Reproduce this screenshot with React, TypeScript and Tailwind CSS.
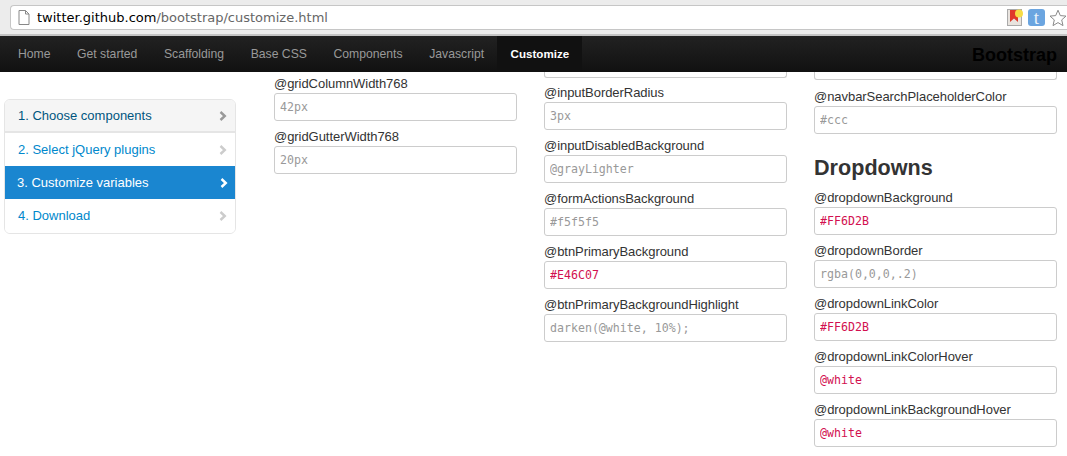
const navLinks = ["Home", "Get started", "Scaffolding", "Base CSS", "Components", "Javascript"];

const steps = [
  { label: "1. Choose components", cls: "h-[33px] bg-[#f5f5f5] text-[#005580] border-b-2 border-[#e5e5e5]", icon: "text-[#999]" },
  { label: "2. Select jQuery plugins", cls: "h-[33px] bg-white text-[#0088cc]", icon: "text-[#ccc]" },
  { label: "3. Customize variables", cls: "h-[33px] bg-[#1a86d0] text-white -mx-px", icon: "text-white" },
  { label: "4. Download", cls: "h-[34px] bg-white text-[#0088cc]", icon: "text-[#ccc]" },
];

type FieldProps = { name: string; value: string; custom?: boolean };

function Field({ name, value, custom }: FieldProps) {
  return (
    <div className="mb-[6px]">
      <label className="block pt-px text-[13px] leading-[18px] tracking-[-0.05px] text-[#333]">{name}</label>
      <input
        readOnly
        value={value}
        className={`block h-[28px] w-full rounded-[3px] border border-[#ccc] bg-white px-[5px] font-['DejaVu_Sans_Mono',monospace] text-[11.6px] outline-none ${
          custom ? "text-[#d2104f]" : "text-[#999]"
        }`}
      />
    </div>
  );
}

function Cut({ height }: { height: string }) {
  return <div className={`rounded-b-[3px] border border-t-0 border-[#ccc] ${height}`} />;
}

function Chevron({ className }: { className: string }) {
  return (
    <svg width="8" height="10" viewBox="0 0 8 10" className={className}>
      <path d="M1.5 1 L5.8 5 L1.5 9" fill="none" stroke="currentColor" strokeWidth="2.4" />
    </svg>
  );
}

function PageIcon() {
  return (
    <svg width="12" height="15" viewBox="0 0 12 15" className="ml-[7px] shrink-0">
      <path d="M1 .5 H7.5 L11 4 V14.5 H1 Z" fill="#fff" stroke="#888" />
      <path d="M7.5 .5 V4 H11" fill="none" stroke="#888" />
    </svg>
  );
}

function BookmarkIcon() {
  return (
    <svg width="17" height="17" viewBox="0 0 17 17">
      <rect x="0.5" y="0.5" width="14" height="16" fill="#e9e4df" stroke="#aaa" />
      <path d="M3 1 H11 V13 L7 9.5 L3 13 Z" fill="#e0392b" />
      <circle cx="12" cy="4.5" r="4" fill="#f7dc45" />
    </svg>
  );
}

function TIcon() {
  return (
    <div className="flex h-[17px] w-[17px] items-center justify-center rounded-[3px] bg-[#6ba5e0] font-['Liberation_Serif',serif] text-[19px] leading-none text-[#eaf3fb]">
      t
    </div>
  );
}

function StarIcon() {
  return (
    <svg width="18" height="18" viewBox="0 0 18 18" className="shrink-0">
      <path
        d="M9 1.2 L11.3 6.6 L17 7.1 L12.7 10.9 L14 16.6 L9 13.6 L4 16.6 L5.3 10.9 L1 7.1 L6.7 6.6 Z"
        fill="#fff"
        stroke="#8a8a8a"
      />
    </svg>
  );
}

export default function App() {
  return (
    <div className="h-[456px] w-[1067px] overflow-hidden bg-white font-['Liberation_Sans',sans-serif]">
      {/* BROWSER TOOLBAR */}
      <div className="h-[36px] border-b-2 border-[#c4c4c4] bg-[#ececec] pt-[5px]">
        <div className="ml-[10px] flex h-[25px] items-center rounded-l-[4px] border border-r-0 border-[#c6c6c6] bg-white">
          <PageIcon />
          <div className="ml-[7px] flex-1 font-['DejaVu_Sans',sans-serif] text-[13px] text-[#666]">
            <span className="text-black">twitter.github.com</span>/bootstrap/customize.html
          </div>
          <div className="flex items-center gap-[4px]">
            <BookmarkIcon />
            <TIcon />
            <StarIcon />
          </div>
        </div>
      </div>

      {/* NAVBAR */}
      <nav className="flex h-[36px] items-stretch justify-between bg-gradient-to-b from-[#222222] to-[#111111] pl-[4.7px] pr-[10px] text-[12.2px]">
        <div className="flex items-stretch">
          {navLinks.map((link) => (
            <a key={link} className="flex items-center px-[13.3px] text-[#999]">
              {link}
            </a>
          ))}
          <a className="flex w-[85px] items-center justify-center bg-[#111] text-[11.6px] font-bold text-white">Customize</a>
        </div>
        <div className="mt-[2px] flex items-center text-[18px] font-bold text-[#000]">Bootstrap</div>
      </nav>

      {/* CONTENT */}
      <div className="flex items-start pl-[4px]">
        {/* SIDEBAR */}
        <div className="mt-[27px] w-[232px] shrink-0 overflow-hidden rounded-[6px] border border-[#e5e5e5] text-[13px]">
          {steps.map((step) => (
            <div key={step.label} className={`flex items-center justify-between pl-[13px] pr-[8px] ${step.cls}`}>
              <span>{step.label}</span>
              <Chevron className={step.icon} />
            </div>
          ))}
        </div>

        {/* COLUMN 1 */}
        <div className="ml-[38px] w-[243px] pt-[2px]">
          <Field name="@gridColumnWidth768" value="42px" />
          <Field name="@gridGutterWidth768" value="20px" />
        </div>

        {/* COLUMN 2 */}
        <div className="ml-[27px] w-[243px]">
          <Cut height="h-[6px]" />
          <div className="pt-[5px]">
            <Field name="@inputBorderRadius" value="3px" />
            <Field name="@inputDisabledBackground" value="@grayLighter" />
            <Field name="@formActionsBackground" value="#f5f5f5" />
            <Field name="@btnPrimaryBackground" value="#E46C07" custom />
            <Field name="@btnPrimaryBackgroundHighlight" value="darken(@white, 10%);" />
          </div>
        </div>

        {/* COLUMN 3 */}
        <div className="ml-[27px] w-[243px]">
          <Cut height="h-[8px]" />
          <div className="pt-[7px]">
            <Field name="@navbarSearchPlaceholderColor" value="#ccc" />
            <h2 className="mb-[5px] mt-[19px] text-[21.6px] font-bold leading-[30px] text-[#333]">Dropdowns</h2>
            <Field name="@dropdownBackground" value="#FF6D2B" custom />
            <Field name="@dropdownBorder" value="rgba(0,0,0,.2)" />
            <Field name="@dropdownLinkColor" value="#FF6D2B" custom />
            <Field name="@dropdownLinkColorHover" value="@white" custom />
            <Field name="@dropdownLinkBackgroundHover" value="@white" custom />
          </div>
        </div>
      </div>
    </div>
  );
}
